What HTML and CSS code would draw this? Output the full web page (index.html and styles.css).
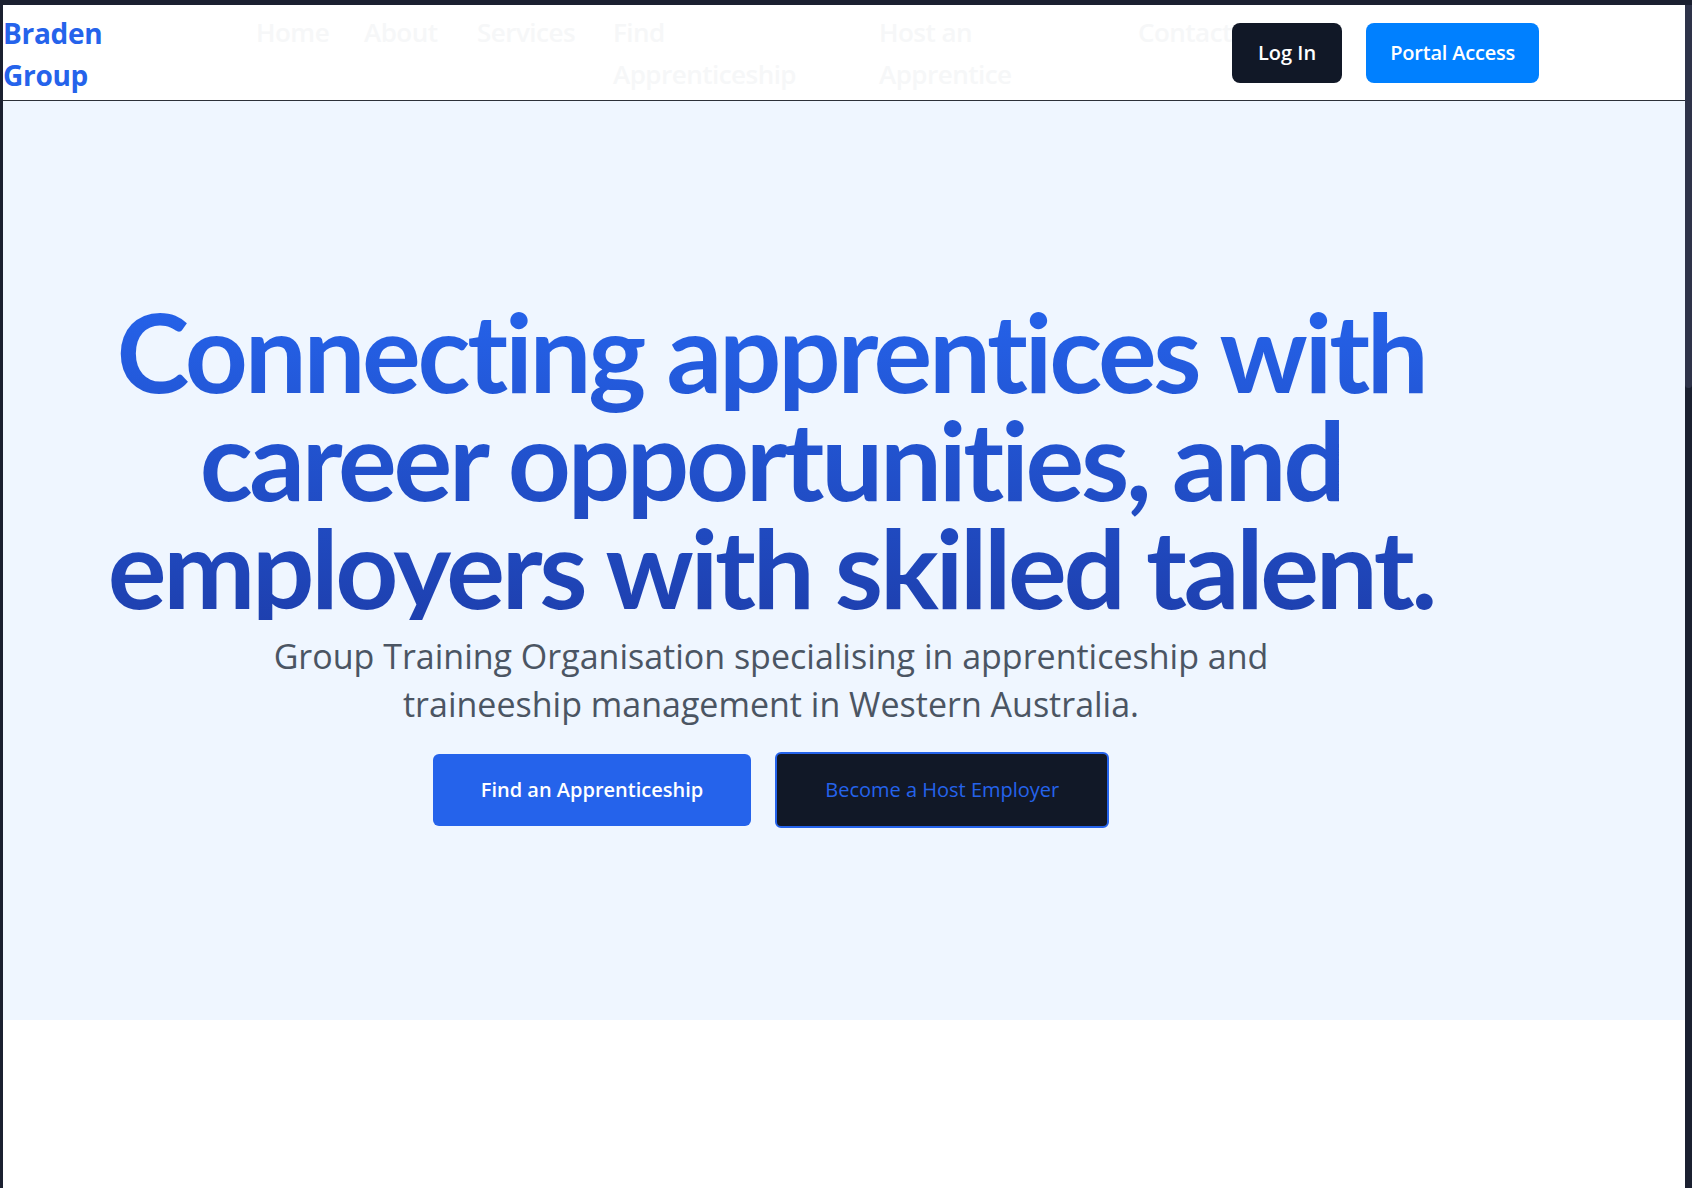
FILE: index.html
```html
<!DOCTYPE html>
<html lang="en">
<head>
<meta charset="utf-8">
<title>Braden Group</title>
<link rel="stylesheet" href="styles.css">
</head>
<body>
<div class="page">
  <header class="site-header">
    <div class="header-inner">
      <a class="brand" href="#"><span class="brand-name">Braden Group</span></a>
      <nav class="main-nav">
        <a href="#">Home</a>
        <a href="#">About</a>
        <a href="#">Services</a>
        <a href="#">Find Apprenticeship</a>
        <a href="#">Host an Apprentice</a>
        <a href="#">Contact</a>
      </nav>
      <div class="header-actions">
        <a class="btn btn-dark" href="#">Log In</a>
        <a class="btn btn-portal" href="#">Portal Access</a>
      </div>
    </div>
  </header>
  <section class="hero">
    <div class="hero-inner">
      <h1 class="hero-title">Connecting apprentices with<br>career opportunities, and<br>employers with skilled talent.</h1>
      <p class="hero-lead">Group Training Organisation specialising in apprenticeship and<br>traineeship management in Western Australia.</p>
      <div class="hero-actions">
        <a class="btn-lg btn-primary" href="#">Find an Apprenticeship</a>
        <a class="btn-lg btn-outline" href="#">Become a Host Employer</a>
      </div>
    </div>
  </section>
</div>
<div class="scroll-thumb"></div>
</body>
</html>
```

FILE: styles.css
```css
* { box-sizing: border-box; }

html, body { height: 100%; }

body {
  margin: 0;
  padding: 5px 7px 0 3px;
  background: #1b2030;
  font-family: "Open Sans", "Noto Sans", sans-serif;
  overflow: hidden;
}

.page {
  background: #ffffff;
  min-height: 1183px;
}

.site-header {
  background: #ffffff;
  border-bottom: 1px solid #2d3139;
}

.header-inner {
  max-width: 1536px;
  height: 95px;
  display: flex;
  align-items: center;
}

.brand {
  flex: 0 0 253px;
  padding-top: 2px;
  text-decoration: none;
  color: #2563eb;
  font-size: 28px;
  line-height: 42px;
  font-weight: 700;
  letter-spacing: -0.01em;
}

.brand-name {
  display: block;
  max-width: 110px;
}

.main-nav {
  display: grid;
  grid-template-columns: 72px 77px 100px 230px 223px 94px;
  column-gap: 36px;
  font-size: 26px;
  line-height: 42px;
  font-weight: 600;
  letter-spacing: -0.02em;
}

.main-nav a {
  color: #f6f7f8;
  text-decoration: none;
}

.header-actions {
  margin-left: auto;
  display: flex;
  gap: 24px;
}

.btn {
  display: block;
  padding: 16px 26px;
  border-radius: 8px;
  font-size: 20px;
  line-height: 28px;
  font-weight: 600;
  color: #ffffff;
  text-decoration: none;
  white-space: nowrap;
}

.btn-dark { background: #111827; }
.btn-portal { background: #0080ff; letter-spacing: -0.01em; padding: 16px 24px; }

.hero {
  background: #eff6ff;
  padding: 195px 0 192px;
}

.hero-inner {
  max-width: 1536px;
  text-align: center;
}

.hero-title {
  margin: 0;
  font-family: "Lato", "Open Sans", sans-serif;
  font-size: 110px;
  line-height: 108px;
  font-weight: 700;
  letter-spacing: -0.03em;
  background: linear-gradient(180deg, #2563eb 0%, #1e40af 100%);
  -webkit-background-clip: text;
  background-clip: text;
  color: transparent;
}

.hero-lead {
  margin: 12px auto 0;
  max-width: 1024px;
  font-size: 34px;
  line-height: 48px;
  color: #4b5563;
}

.hero-actions {
  display: flex;
  justify-content: center;
  align-items: center;
  gap: 24px;
  margin-top: 24px;
}

.btn-lg {
  display: block;
  padding: 22px 48px;
  border-radius: 6px;
  font-size: 20px;
  line-height: 28px;
  text-decoration: none;
  white-space: nowrap;
}

.btn-primary {
  background: #2563eb;
  color: #ffffff;
  font-weight: 600;
}

.btn-outline {
  background: #111827;
  color: #2563eb;
  border: 2px solid #2563eb;
  font-weight: 500;
}

.scroll-thumb {
  position: fixed;
  top: 5px;
  right: 0;
  width: 7px;
  height: 383px;
  background: #2e3349;
  border-radius: 0 0 4px 4px;
}
```
